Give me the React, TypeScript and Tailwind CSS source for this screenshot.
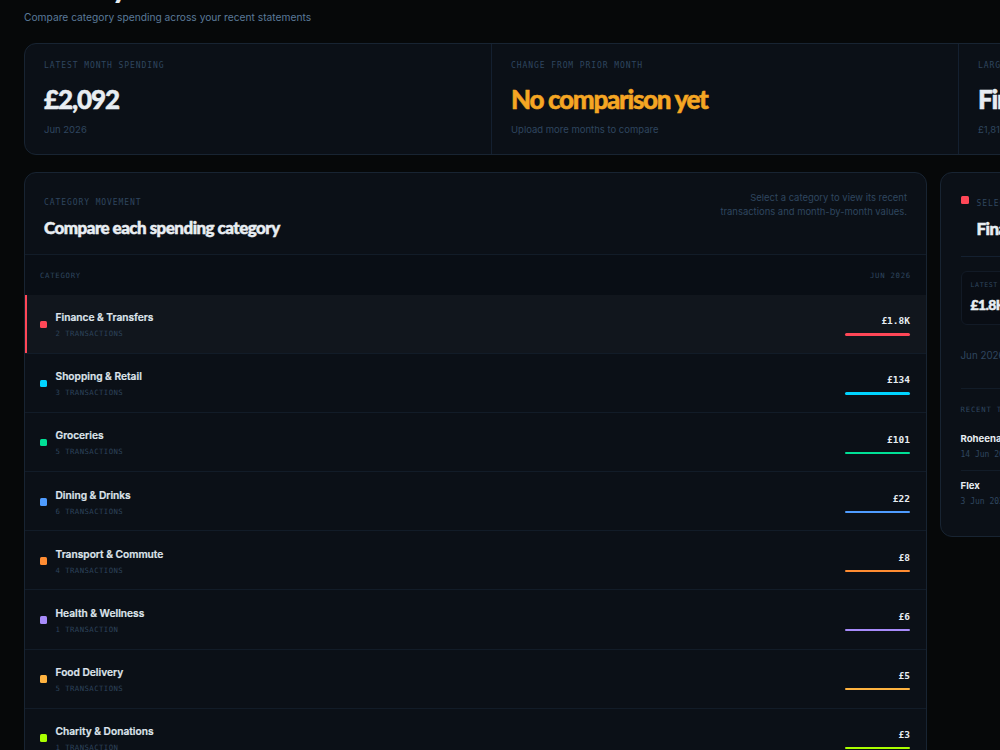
type Row = { name: string; count: string; value: string; dot: string; bar: string; active?: boolean };

const rows: Row[] = [
  { name: 'Finance & Transfers', count: '2 TRANSACTIONS', value: '£1.8K', dot: 'bg-[#ff4757]', bar: 'bg-[#ff4757]', active: true },
  { name: 'Shopping & Retail', count: '3 TRANSACTIONS', value: '£134', dot: 'bg-[#00d4ff]', bar: 'bg-[#00d4ff]' },
  { name: 'Groceries', count: '5 TRANSACTIONS', value: '£101', dot: 'bg-[#00e096]', bar: 'bg-[#00e096]' },
  { name: 'Dining & Drinks', count: '6 TRANSACTIONS', value: '£22', dot: 'bg-[#4f9cff]', bar: 'bg-[#4f9cff]' },
  { name: 'Transport & Commute', count: '4 TRANSACTIONS', value: '£8', dot: 'bg-[#ff8c32]', bar: 'bg-[#ff8c32]' },
  { name: 'Health & Wellness', count: '1 TRANSACTION', value: '£6', dot: 'bg-[#a78bfa]', bar: 'bg-[#a78bfa]' },
  { name: 'Food Delivery', count: '5 TRANSACTIONS', value: '£5', dot: 'bg-[#ffb340]', bar: 'bg-[#ffb340]' },
  { name: 'Charity & Donations', count: '1 TRANSACTION', value: '£3', dot: 'bg-[#aaff00]', bar: 'bg-[#aaff00]' },
];

const summary = [
  { label: 'LATEST MONTH SPENDING', value: '£2,092', note: 'Jun 2026', tone: 'text-[#e8edf2] tracking-[-1.1px]' },
  { label: 'CHANGE FROM PRIOR MONTH', value: 'No comparison yet', note: 'Upload more months to compare', tone: 'text-[#f5a623] tracking-[-1.3px]' },
  { label: 'LARGEST CATEGORY', value: 'Finance & Transfers', note: '£1,812', tone: 'text-[#e8edf2] tracking-[-1.2px]' },
];

const mono = "font-['DejaVu_Sans_Mono',monospace]";
const display = "font-['Lato',sans-serif] font-black [-webkit-text-stroke:0.5px_currentColor]";
const label = "font-['DejaVu_Sans_Mono',monospace] text-[8px] leading-[10px] tracking-[0.92px] text-[#2f465f]";

function Summary() {
  return (
    <section className="grid h-[112px] grid-cols-[467px_467px_1fr] overflow-hidden rounded-[12px] border border-[#182432] bg-[#0b1017]">
      {summary.map((s) => (
        <div key={s.label} className="border-r border-[#142030] px-[19px] pt-[17px] last:border-r-0">
          <div className={label}>{s.label}</div>
          <div className={`mt-[12px] text-[26px] leading-[32px] whitespace-nowrap ${display} ${s.tone}`}>{s.value}</div>
          <div className="mt-[8px] text-[9.5px] leading-[14px] text-[#2f465f]">{s.note}</div>
        </div>
      ))}
    </section>
  );
}

function CategoryRow({ row }: { row: Row }) {
  return (
    <div className={`relative flex h-[59.1px] items-center border-b border-[#121c28] pl-[15px] pr-[16px] ${row.active ? 'bg-[#11161d]' : ''}`}>
      {row.active && <span className="absolute -left-px top-0 h-full w-[3px] bg-[#ff4757]" />}
      <span className={`mt-[1px] h-[7.5px] w-[7px] rounded-[1.5px] ${row.dot}`} />
      <div className="ml-[8.5px] flex-1 pt-[1.4px]">
        <div className="text-[10.2px] font-semibold leading-[14px] text-[#dfe5ec] [-webkit-text-stroke:0.2px_currentColor]">{row.name}</div>
        <div className={`${mono} mt-[5px] text-[7.3px] leading-[10px] tracking-[0.44px] text-[#2d435b]`}>{row.count}</div>
      </div>
      <div className="w-[65px] pt-[2px]">
        <div className={`${mono} text-right text-[9.5px] font-bold leading-[13px] text-[#e8edf2]`}>{row.value}</div>
        <div className={`mt-[6px] h-[2.4px] rounded-full ${row.bar}`} />
      </div>
    </div>
  );
}

function Movement() {
  return (
    <section className="h-[640px] w-[903px] overflow-hidden rounded-[12px] border border-[#182432] bg-[#0b1017]">
      <header className="flex h-[82px] justify-between border-b border-[#121c28] px-[19px]">
        <div className="pt-[25px]">
          <div className={label}>CATEGORY MOVEMENT</div>
          <h2 className={`mt-[9px] text-[17px] leading-[22px] tracking-[-0.54px] text-[#e8edf2] ${display}`}>Compare each spending category</h2>
        </div>
        <p className="pt-[18px] text-right text-[9.45px] leading-[14px] text-[#2f465f]">
          Select a category to view its recent<br />transactions and month-by-month values.
        </p>
      </header>
      <div className={`${mono} flex h-[40px] items-center justify-between bg-[#090e15] pl-[15px] pr-[15px] pt-[2px] text-[7.3px] tracking-[0.73px] text-[#2f465f]`}>
        <span>CATEGORY</span>
        <span>JUN 2026</span>
      </div>
      {rows.map((r) => <CategoryRow key={r.name} row={r} />)}
    </section>
  );
}

function Selected() {
  return (
    <aside className="-ml-px h-[365px] flex-1 rounded-[12px] border border-[#182432] bg-[#0b1017] pl-[19.5px] pr-[19px]">
      <header className="flex h-[84px] border-b border-[#142030]">
        <span className="mt-[23px] h-[8px] w-[8px] rounded-[1.5px] bg-[#ff4757]" />
        <div className="ml-[8px] pt-[26px]">
          <div className={label}>SELECTED CATEGORY</div>
          <h2 className={`mt-[9px] text-[17px] leading-[22px] tracking-[-0.54px] text-[#e8edf2] ${display}`}>Finance &amp; Transfers</h2>
        </div>
      </header>
      <div className="mt-[14px] h-[54px] w-[140px] rounded-[6px] border border-[#121a26] bg-[#090d14] px-[9px] pt-[9px]">
        <div className={`${mono} text-[6.6px] leading-[8px] tracking-[0.6px] text-[#2f465f]`}>LATEST MONTH</div>
        <div className={`mt-[6px] text-[14px] leading-[20px] tracking-[-0.6px] text-[#e8edf2] ${display}`}>£1.8K</div>
      </div>
      <div className="mt-[24px] h-[40px] border-b border-[#121c28] text-[9.8px] leading-[14px] text-[#2f465f]">Jun 2026</div>
      <div className={`${mono} mt-[16px] text-[7.3px] leading-[10px] tracking-[0.8px] text-[#2f465f]`}>RECENT TRANSACTIONS</div>
      <div className="mt-[8px] h-[48px] border-b border-[#121c28] pt-[9px]">
        <div className="text-[9.6px] font-bold leading-[14px] text-[#e8edf2]">Roheena</div>
        <div className={`${mono} mt-[4px] text-[8px] leading-[10px] text-[#2f465f]`}>14 Jun 2026</div>
      </div>
      <div className="pt-[8px]">
        <div className="text-[9.6px] font-bold leading-[14px] text-[#e8edf2]">Flex</div>
        <div className={`${mono} mt-[4px] text-[8px] leading-[10px] text-[#2f465f]`}>3 Jun 2026</div>
      </div>
    </aside>
  );
}

export default function App() {
  return (
    <div className="h-[750px] w-[1000px] overflow-hidden bg-[#060809] font-['Inter',sans-serif]">
      <main className="w-[1450px] px-[24px]">
        <h1 className="-mt-[32px] mb-[6px] font-['Lato',sans-serif] text-[30px] font-black leading-[36px] tracking-[-1.7px] text-[#e8edf2]">Monthly trends</h1>
        <p className="mb-[18px] text-[10.22px] leading-[15px] text-[#5b7a99]">Compare category spending across your recent statements</p>
        <Summary />
        <div className="mt-[17px] flex gap-[14px]">
          <Movement />
          <Selected />
        </div>
      </main>
    </div>
  );
}
